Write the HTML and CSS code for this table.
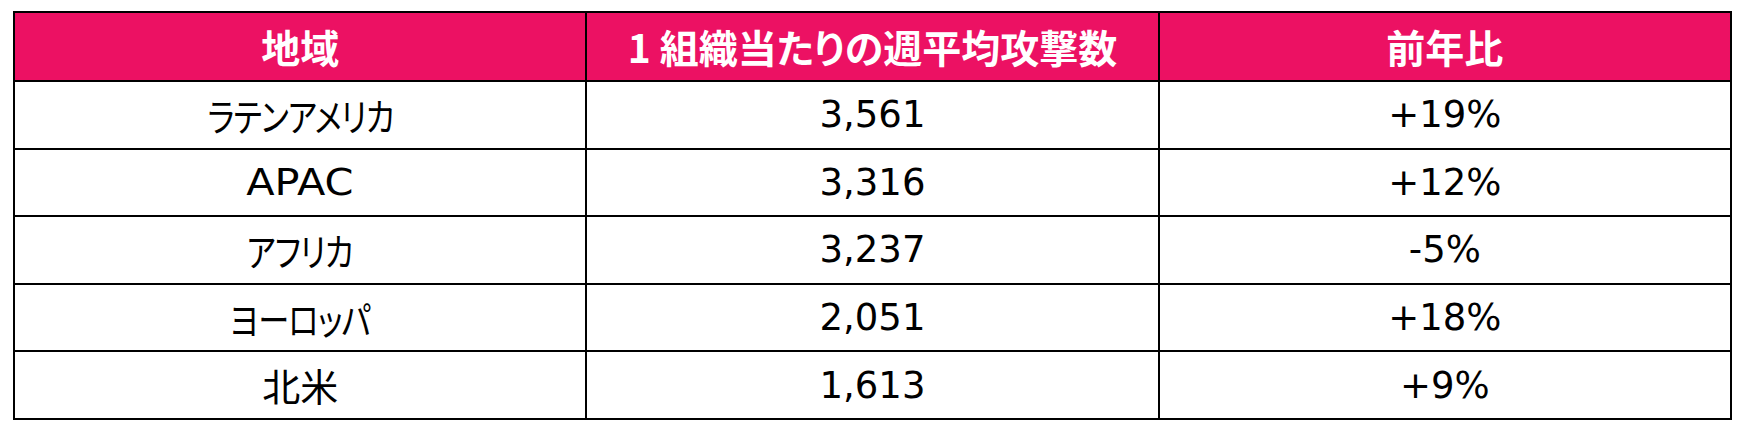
FILE: index.html
```html
<!DOCTYPE html>
<html lang="ja">
<head>
<meta charset="utf-8">
<title>地域別攻撃数</title>
<link rel="stylesheet" href="styles.css">
</head>
<body>
<div class="wrap">
<table class="stats">
  <thead>
    <tr><th>地域</th><th>1 組織当たりの週平均攻撃数</th><th>前年比</th></tr>
  </thead>
  <tbody>
    <tr><td class="jp"><span class="kana">ラテンアメリカ</span></td><td>3,561</td><td>+19%</td></tr>
    <tr><td><span class="wide">APAC</span></td><td>3,316</td><td>+12%</td></tr>
    <tr><td class="jp"><span class="kana">アフリカ</span></td><td>3,237</td><td>-5%</td></tr>
    <tr><td class="jp"><span class="kana">ヨーロッパ</span></td><td>2,051</td><td>+18%</td></tr>
    <tr><td class="jp">北米</td><td>1,613</td><td>+9%</td></tr>
  </tbody>
</table>
</div>
</body>
</html>
```
FILE: styles.css
```css
html, body {
  margin: 0;
  padding: 0;
  background: #ffffff;
}
.wrap {
  padding: 11px 0 0 13px;
}
.stats {
  width: 1719px;
  table-layout: fixed;
  border-collapse: separate;
  border-spacing: 0;
  border-top: 2px solid #000;
  border-left: 2px solid #000;
  font-family: "DejaVu Sans", "Noto Sans CJK JP", sans-serif;
  font-feature-settings: "palt";
}
.stats th,
.stats td {
  border-right: 2px solid #000;
  border-bottom: 2px solid #000;
  text-align: center;
  vertical-align: middle;
  padding: 0;
}
.stats th {
  height: 67px;
  background: #ec1163;
  color: #ffffff;
  font-family: "Noto Sans CJK JP", sans-serif;
  font-weight: 700;
  font-size: 39px;
  line-height: 1;
}
.stats td {
  height: 65.6px;
  color: #000;
  font-size: 37px;
  line-height: 1;
}
.stats td.jp {
  font-family: "Noto Sans CJK JP", sans-serif;
  font-size: 38px;
}
.kana {
  display: inline-block;
  transform: scaleX(0.82);
  transform-origin: center;
  letter-spacing: -1px;
}
.wide {
  display: inline-block;
  transform: scaleX(1.12);
  transform-origin: center;
}
```
